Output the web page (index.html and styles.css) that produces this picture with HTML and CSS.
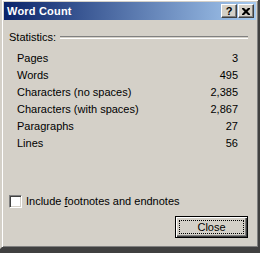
FILE: index.html
```html
<!DOCTYPE html>
<html>
<head>
<meta charset="utf-8">
<link rel="stylesheet" href="styles.css">
</head>
<body>
<div class="window">
  <div class="titlebar">
    <span class="title">Word Count</span>
    <div class="tbtns">
      <span class="tbtn help">?</span>
      <span class="tbtn close">
        <svg width="8" height="7" viewBox="0 0 8 7"><path d="M0 0h2l2 2 2-2h2v1l-2.5 2.5L8 6v1H6L4 5 2 7H0V6l2.5-2.5L0 1z" fill="#000"/></svg>
      </span>
    </div>
  </div>
  <div class="content">
    <div class="group-head">
      <span>Statistics:</span>
      <span class="etch"></span>
    </div>
    <div class="stats">
      <div class="row"><span>Pages</span><span>3</span></div>
      <div class="row"><span>Words</span><span>495</span></div>
      <div class="row"><span>Characters (no spaces)</span><span>2,385</span></div>
      <div class="row"><span>Characters (with spaces)</span><span>2,867</span></div>
      <div class="row"><span>Paragraphs</span><span>27</span></div>
      <div class="row"><span>Lines</span><span>56</span></div>
    </div>
    <label class="check">
      <span class="box"></span>
      <span>Include <u>f</u>ootnotes and endnotes</span>
    </label>
    <div class="actions">
      <button class="btn"><span class="focus">Close</span></button>
    </div>
  </div>
</div>
</body>
</html>
```
FILE: styles.css
```css
html, body {
  margin: 0;
  padding: 0;
  background: #404040;
}
body {
  width: 260px;
  height: 253px;
  overflow: hidden;
  font-family: "Liberation Sans", Arial, sans-serif;
  font-size: 11px;
  color: #000;
}
.window {
  box-sizing: border-box;
  width: 260px;
  height: 251px;
  margin-top: -2px;
  background: #d4d0c8;
  border-style: solid;
  border-width: 2px;
  border-color: #d4d0c8 #404040 #404040 #d4d0c8;
  box-shadow: inset 1px 1px 0 #fff, inset -1px -1px 0 #808080;
  padding: 2px;
  display: flex;
  flex-direction: column;
}
.titlebar {
  height: 18px;
  background: linear-gradient(to right, #0a246a, #a6caf0);
  display: flex;
  align-items: center;
  justify-content: space-between;
  padding: 0 2px 0 3px;
}
.title {
  color: #fff;
  font-weight: bold;
  font-size: 11px;
  letter-spacing: 0.2px;
}
.tbtns {
  display: flex;
}
.tbtn {
  box-sizing: border-box;
  width: 16px;
  height: 14px;
  background: #d4d0c8;
  border-style: solid;
  border-width: 1px;
  border-color: #fff #404040 #404040 #fff;
  box-shadow: inset -1px -1px 0 #808080;
  display: flex;
  align-items: center;
  justify-content: center;
  font-weight: bold;
  font-size: 11px;
  line-height: 1;
}
.help {
  margin-right: 1px;
}
.content {
  flex: 1;
  display: flex;
  flex-direction: column;
  padding: 10px 6px 7px 5px;
}
.group-head {
  display: flex;
  align-items: center;
  gap: 4px;
  height: 14px;
}
.etch {
  flex: 1;
  height: 1px;
  border-top: 1px solid #808080;
  border-bottom: 1px solid #fff;
  margin-right: 2px;
}
.stats {
  display: flex;
  flex-direction: column;
  padding: 5px 12px 0 8px;
}
.row {
  display: flex;
  justify-content: space-between;
  height: 17px;
  align-items: center;
}
.check {
  margin-top: auto;
  display: flex;
  align-items: center;
  gap: 4px;
  height: 14px;
}
.box {
  box-sizing: border-box;
  width: 13px;
  height: 13px;
  background: #fff;
  border-style: solid;
  border-width: 1px;
  border-color: #808080 #fff #fff #808080;
  box-shadow: inset 1px 1px 0 #404040, inset -1px -1px 0 #d4d0c8;
}
.actions {
  display: flex;
  justify-content: flex-end;
  margin-top: 8px;
  padding-right: 2px;
}
.btn {
  box-sizing: border-box;
  width: 73px;
  height: 22px;
  background: #d4d0c8;
  border: 1px solid #000;
  padding: 0;
  margin: 0;
  box-shadow: inset 1px 1px 0 #fff, inset -1px -1px 0 #404040, inset -2px -2px 0 #808080;
  font-family: inherit;
  font-size: 11px;
  display: flex;
  align-items: center;
  justify-content: center;
}
.focus {
  box-sizing: border-box;
  width: 65px;
  height: 14px;
  border: 1px dotted #000;
  display: flex;
  align-items: center;
  justify-content: center;
}
```
